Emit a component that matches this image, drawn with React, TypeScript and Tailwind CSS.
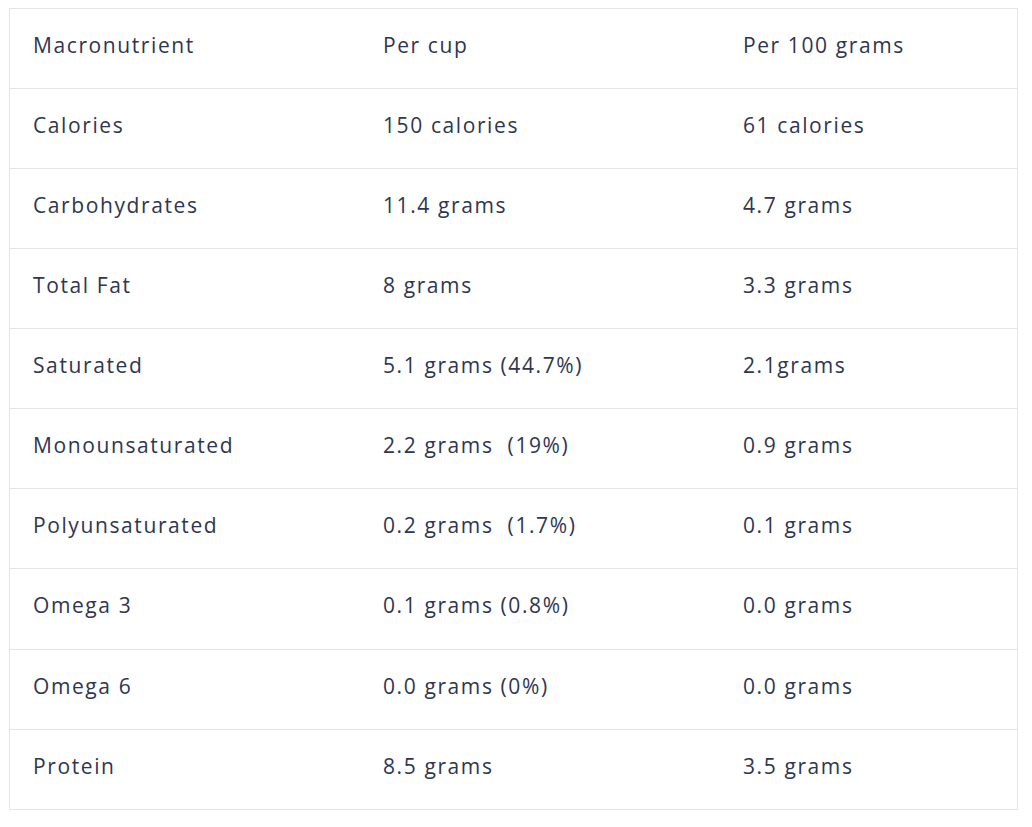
import React from "react";

const rows: [string, string, string][] = [
  ["Macronutrient", "Per cup", "Per 100 grams"],
  ["Calories", "150 calories", "61 calories"],
  ["Carbohydrates", "11.4 grams", "4.7 grams"],
  ["Total Fat", "8 grams", "3.3 grams"],
  ["Saturated", "5.1 grams (44.7%)", "2.1grams"],
  ["Monounsaturated", "2.2 grams\u00a0 (19%)", "0.9 grams"],
  ["Polyunsaturated", "0.2 grams\u00a0 (1.7%)", "0.1 grams"],
  ["Omega 3", "0.1 grams (0.8%)", "0.0 grams"],
  ["Omega 6", "0.0 grams (0%)", "0.0 grams"],
  ["Protein", "8.5 grams", "3.5 grams"],
];

export default function App() {
  return (
    <div className="min-h-[827px] w-[1032px] bg-white pt-[8px] pl-[9px]" style={{ fontFamily: "'Open Sans', sans-serif" }}>
      <div className="w-[1009px] border border-[#e5e5e5] text-[21px] leading-[28px] text-[#2e3650] tracking-[1.6px]">
        {rows.map((r, i) => (
          <div
            key={i}
            className={`grid grid-cols-[350px_360px_1fr] items-center pb-[8px] ${
              i === 0 ? "h-[79px]" : i === 7 ? "h-[81px] border-t border-[#e5e5e5]" : "h-[80px] border-t border-[#e5e5e5]"
            }`}
          >
            {r.map((c, j) => (
              <div key={j} className="pl-[23px] whitespace-pre">{c}</div>
            ))}
          </div>
        ))}
      </div>
    </div>
  );
}
